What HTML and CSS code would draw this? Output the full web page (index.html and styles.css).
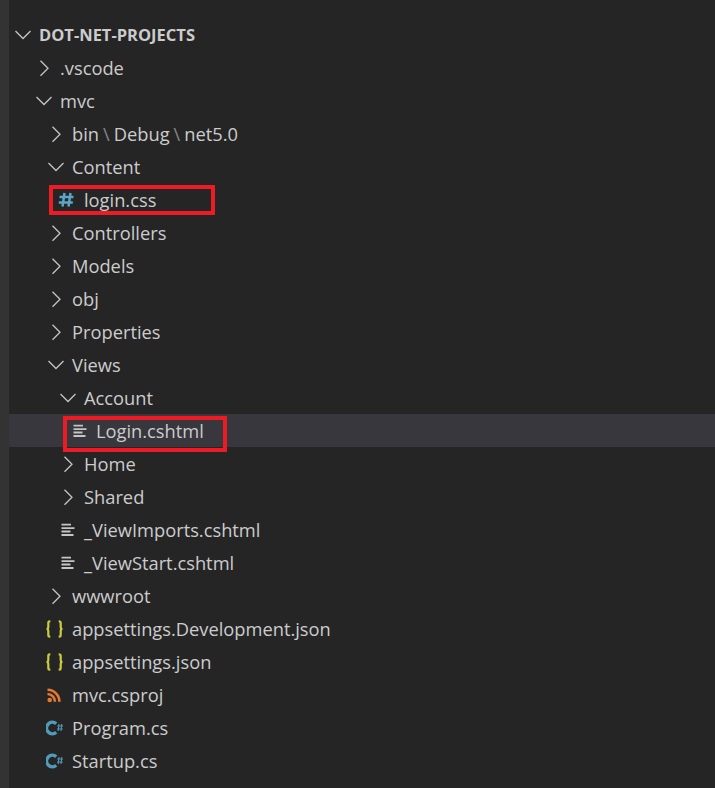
FILE: index.html
```html
<!DOCTYPE html>
<html lang="en">
<head>
<meta charset="utf-8">
<title>Explorer</title>
<link rel="stylesheet" href="styles.css">
</head>
<body>
<svg class="defs" width="0" height="0" aria-hidden="true">
  <symbol id="right" viewBox="0 0 20 20"><path d="M6.500 2.700 L14 10.200 L6.500 17.700" fill="none" stroke="#c5c5c5" stroke-width="1.300"/></symbol>
  <symbol id="down" viewBox="0 0 20 20"><path d="M2.500 6 L10 13.500 L17.500 6" fill="none" stroke="#c5c5c5" stroke-width="1.300"/></symbol>
  <symbol id="lines" viewBox="0 0 20 20"><path d="M3.500 4.700h9.500M3.500 8.100h13M3.500 11.500h9M3.500 15h12" fill="none" stroke="#c5c5c5" stroke-width="1.800"/></symbol>
  <symbol id="hash" viewBox="0 0 20 20"><path d="M6.500 3 L4.500 16.500 M12.500 3 L10.500 16.500 M1.500 7 H15.500 M.8 12.500 H14.800" fill="none" stroke="#5aa5c8" stroke-width="2.500"/></symbol>
  <symbol id="json" viewBox="0 0 20 20"><path d="M4.300 2.300 H3.600 Q2.300 2.300 2.300 3.700 V8 Q2.300 10 .5 10 Q2.300 10 2.300 12 V16.300 Q2.300 17.700 3.600 17.700 H4.300 M12.700 2.300 H13.400 Q14.700 2.300 14.700 3.700 V8 Q14.700 10 16.500 10 Q14.700 10 14.700 12 V16.300 Q14.700 17.700 13.400 17.700 H12.700" fill="none" stroke="#cbcb41" stroke-width="2.200"/></symbol>
  <symbol id="rss" viewBox="0 0 20 20"><circle cx="3.700" cy="15" r="2.300" fill="#e37933"/><path d="M1.500 9 A7.500 7.500 0 0 1 9 16.800 M1.500 4.800 A11.800 11.800 0 0 1 13.400 16.800" fill="none" stroke="#e37933" stroke-width="2.600"/></symbol>
  <symbol id="cs" viewBox="0 0 20 20"><path d="M10.200 5.800 A5.700 5.700 0 1 0 10.200 14.200" fill="none" stroke="#519aba" stroke-width="3.400"/><path d="M13 6 L12.200 13 M15.800 6 L15 13 M11.300 8 H17 M11 11 H16.700" fill="none" stroke="#519aba" stroke-width="1.100"/></symbol>
</svg>
<main class="explorer">
  <div class="row root d0"><svg class="ico"><use href="#down"/></svg><span>DOT-NET-PROJECTS</span></div>
  <div class="row d1"><svg class="ico"><use href="#right"/></svg><span>.vscode</span></div>
  <div class="row d1"><svg class="ico"><use href="#down"/></svg><span>mvc</span></div>
  <div class="row d2"><svg class="ico"><use href="#right"/></svg><span>bin<i class="sep">\</i>Debug<i class="sep">\</i>net5.0</span></div>
  <div class="row d2"><svg class="ico"><use href="#down"/></svg><span>Content</span></div>
  <div class="row d3"><svg class="ico"><use href="#hash"/></svg><span>login.css</span><b class="mark mark-css"></b></div>
  <div class="row d2"><svg class="ico"><use href="#right"/></svg><span>Controllers</span></div>
  <div class="row d2"><svg class="ico"><use href="#right"/></svg><span>Models</span></div>
  <div class="row d2"><svg class="ico"><use href="#right"/></svg><span>obj</span></div>
  <div class="row d2"><svg class="ico"><use href="#right"/></svg><span>Properties</span></div>
  <div class="row d2"><svg class="ico"><use href="#down"/></svg><span>Views</span></div>
  <div class="row d3"><svg class="ico"><use href="#down"/></svg><span>Account</span></div>
  <div class="row d4 selected"><svg class="ico"><use href="#lines"/></svg><span>Login.cshtml</span><b class="mark mark-html"></b></div>
  <div class="row d3"><svg class="ico"><use href="#right"/></svg><span>Home</span></div>
  <div class="row d3"><svg class="ico"><use href="#right"/></svg><span>Shared</span></div>
  <div class="row d3"><svg class="ico"><use href="#lines"/></svg><span>_ViewImports.cshtml</span></div>
  <div class="row d3"><svg class="ico"><use href="#lines"/></svg><span>_ViewStart.cshtml</span></div>
  <div class="row d2"><svg class="ico"><use href="#right"/></svg><span>wwwroot</span></div>
  <div class="row d2"><svg class="ico"><use href="#json"/></svg><span>appsettings.Development.json</span></div>
  <div class="row d2"><svg class="ico"><use href="#json"/></svg><span>appsettings.json</span></div>
  <div class="row d2"><svg class="ico"><use href="#rss"/></svg><span>mvc.csproj</span></div>
  <div class="row d2"><svg class="ico"><use href="#cs"/></svg><span>Program.cs</span></div>
  <div class="row d2"><svg class="ico"><use href="#cs"/></svg><span>Startup.cs</span></div>
</main>
</body>
</html>
```
FILE: styles.css
```css
* { box-sizing: border-box; }
html, body { margin: 0; height: 100%; }
body {
  background: #252526;
  border-left: 9px solid #333333;
  overflow: hidden;
  font-family: "Open Sans", "Noto Sans", sans-serif;
  font-size: 18.300px;
  color: #cccccc;
}
.defs { position: absolute; }
.explorer { padding-top: 18px; }
.row {
  position: relative;
  display: flex;
  align-items: center;
  gap: 6px;
  height: 33px;
  white-space: nowrap;
}
.ico { width: 20px; height: 20px; flex: none; }
.d0 { padding-left: 4px; }
.d1 { padding-left: 25px; }
.d2 { padding-left: 37px; }
.d3 { padding-left: 49px; }
.d4 { padding-left: 61px; }
.root { font-weight: 700; font-size: 16.500px; }
.selected { background: #37373d; }
.sep { font-style: normal; color: #858585; margin: 0 4px; }
.mark {
  position: absolute;
  border: 4px solid #ed1c24;
}
.mark-css { left: 40px; top: 2px; width: 166px; height: 30px; }
.mark-html { left: 54px; top: 2px; width: 164px; height: 36px; }
```
